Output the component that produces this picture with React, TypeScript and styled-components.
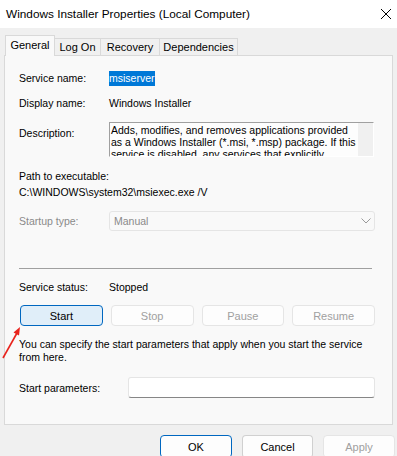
import styled, { createGlobalStyle } from "styled-components";

const GlobalStyle = createGlobalStyle`
  html, body {
    margin: 0;
    padding: 0;
    background: #f0f0f0;
  }
  body {
    font-family: "Liberation Sans", Arial, sans-serif;
    font-size: 10.5px;
    color: #000;
  }
`;

const Window = styled.div`
  position: relative;
  width: 397px;
  height: 456px;
  overflow: hidden;
  background: #f0f0f0;
`;

const TitleBar = styled.div`
  height: 28px;
  background: #ffffff;
  display: flex;
  align-items: center;
  justify-content: space-between;
  padding: 0 5px 0 6px;
`;

const Title = styled.div`
  font-size: 11.8px;
  color: #000;
`;

const Body = styled.div`
  padding: 7px 2px 0 4px;
`;

const TabStrip = styled.div`
  display: flex;
  align-items: flex-end;
  height: 20px;
  margin-left: 1px;
`;

const Tab = styled.div<{ $active?: boolean; $width: number }>`
  position: relative;
  z-index: ${({ $active }) => ($active ? 2 : 1)};
  box-sizing: border-box;
  width: ${({ $width }) => $width}px;
  height: ${({ $active }) => ($active ? 21 : 17)}px;
  margin-bottom: ${({ $active }) => ($active ? -1 : 0)}px;
  margin-left: -1px;
  background: ${({ $active }) => ($active ? "#f9f9f9" : "#f0f0f0")};
  border: 1px solid #d9d9d9;
  border-bottom: none;
  display: flex;
  align-items: center;
  justify-content: center;
  font-size: 11px;
  padding-bottom: ${({ $active }) => ($active ? 2 : 0)}px;
  &:first-child {
    margin-left: 0;
  }
`;

const Panel = styled.div`
  position: relative;
  box-sizing: border-box;
  width: 389px;
  height: 370px;
  border: 1px solid #d9d9d9;
  background: #f9f9f9;
  padding: 12px 17px 0 14px;
`;

const FieldRow = styled.div<{ $mt?: number; $h: number; $label?: number; $align?: string }>`
  display: grid;
  grid-template-columns: ${({ $label }) => $label ?? 90}px 1fr;
  align-items: ${({ $align }) => $align ?? "center"};
  height: ${({ $h }) => $h}px;
  margin-top: ${({ $mt }) => $mt ?? 0}px;
`;

const Label = styled.div<{ $disabled?: boolean; $offset?: number }>`
  line-height: 20px;
  margin-top: ${({ $offset }) => $offset ?? 0}px;
  color: ${({ $disabled }) => ($disabled ? "#8a8a8a" : "#000")};
  white-space: nowrap;
`;

const Value = styled.div`
  white-space: nowrap;
`;

const Selected = styled.span`
  background: #0078d7;
  color: #fff;
  padding: 1px 0 2px;
`;

const TextBox = styled.div`
  box-sizing: border-box;
  width: 265px;
  height: 35px;
  border-top: 1px solid #a0a0a0;
  border-left: 1px solid #a0a0a0;
  border-right: 1px solid #ffffff;
  border-bottom: 1px solid #ffffff;
  background: #fdfdfd;
  display: flex;
  overflow: hidden;
`;

const TextLines = styled.div`
  flex: 1;
  padding: 1px 0 0 1px;
  line-height: 12px;
  white-space: nowrap;
  overflow: hidden;
`;

const ScrollTrack = styled.div`
  width: 15px;
  background: #f0f0f0;
`;

const PathBlock = styled.div`
  margin-top: 11px;
  line-height: 16px;
`;

const Dropdown = styled.div`
  box-sizing: border-box;
  height: 20px;
  width: 266px;
  border: 1px solid #e5e5e5;
  border-radius: 3px;
  background: #f9f9f9;
  color: #8a8a8a;
  display: flex;
  align-items: center;
  justify-content: space-between;
  padding: 0 3px 0 4px;
`;

const Separator = styled.div`
  height: 1px;
  background: #a0a0a0;
  margin: 37px 3px 0 0;
`;

const ButtonGrid = styled.div`
  display: grid;
  grid-template-columns: repeat(4, 1fr);
  column-gap: 8px;
  margin: 8px 0 0 1px;
  height: 21px;
`;

const Button = styled.div<{ $variant?: "primary" | "default" | "disabled" | "focus"; $width?: number }>`
  box-sizing: border-box;
  height: 100%;
  width: ${({ $width }) => ($width ? `${$width}px` : "auto")};
  border-radius: 4px;
  display: flex;
  align-items: center;
  justify-content: center;
  font-size: 11px;
  background: ${({ $variant }) =>
    $variant === "focus" ? "#e0eef9" : "#fdfdfd"};
  color: ${({ $variant }) => ($variant === "disabled" ? "#a0a0a0" : "#000")};
  border: 1px solid
    ${({ $variant }) =>
      $variant === "focus" || $variant === "primary"
        ? "#0067c0"
        : $variant === "disabled"
        ? "#e5e5e5"
        : "#d0d0d0"};
  border-bottom-color: ${({ $variant }) =>
    $variant === "focus" || $variant === "primary"
      ? "#0067c0"
      : $variant === "disabled"
      ? "#e5e5e5"
      : "#b8b8b8"};
`;

const HelpText = styled.div`
  margin-top: 12px;
  line-height: 13px;
  white-space: nowrap;
`;

const Input = styled.div`
  box-sizing: border-box;
  height: 21px;
  width: 247px;
  background: #ffffff;
  border: 1px solid #e5e5e5;
  border-bottom-color: #868686;
  border-radius: 3px;
`;

const Footer = styled.div`
  display: flex;
  justify-content: flex-end;
  gap: 10px;
  margin-top: 10px;
  height: 23px;
`;

const ArrowOverlay = styled.svg`
  position: absolute;
  left: 0;
  top: 320px;
  width: 30px;
  height: 45px;
`;

const CloseIcon = () => (
  <svg width="12" height="12" viewBox="0 0 12 12">
    <path d="M1 1 L11 11 M11 1 L1 11" stroke="#000" strokeWidth="1" fill="none" />
  </svg>
);

const Chevron = () => (
  <svg width="10" height="6" viewBox="0 0 10 6">
    <path d="M0.5 0.5 L5 5 L9.5 0.5" stroke="#9a9a9a" strokeWidth="1" fill="none" />
  </svg>
);

const tabs = [
  { label: "General", width: 50 },
  { label: "Log On", width: 47 },
  { label: "Recovery", width: 60 },
  { label: "Dependencies", width: 79 },
];

const App = () => {
  return (
    <Window>
      <GlobalStyle />
      <TitleBar>
        <Title>Windows Installer Properties (Local Computer)</Title>
        <CloseIcon />
      </TitleBar>
      <Body>
        <TabStrip>
          {tabs.map((t, i) => (
            <Tab key={t.label} $active={i === 0} $width={t.width}>
              {t.label}
            </Tab>
          ))}
        </TabStrip>
        <Panel>
          <FieldRow $h={20}>
            <Label>Service name:</Label>
            <Value>
              <Selected>msiserver</Selected>
            </Value>
          </FieldRow>
          <FieldRow $h={20} $mt={5}>
            <Label>Display name:</Label>
            <Value>Windows Installer</Value>
          </FieldRow>
          <FieldRow $h={35} $mt={9} $align="start">
            <Label $offset={1}>Description:</Label>
            <TextBox>
              <TextLines>
                Adds, modifies, and removes applications provided
                <br />
                as a Windows Installer (*.msi, *.msp) package. If this
                <br />
                service is disabled, any services that explicitly
              </TextLines>
              <ScrollTrack />
            </TextBox>
          </FieldRow>
          <PathBlock>
            Path to executable:
            <br />
            C:\WINDOWS\system32\msiexec.exe /V
          </PathBlock>
          <FieldRow $h={20} $mt={11}>
            <Label $disabled>Startup type:</Label>
            <Dropdown>
              Manual
              <Chevron />
            </Dropdown>
          </FieldRow>
          <Separator />
          <FieldRow $h={20} $mt={8}>
            <Label>Service status:</Label>
            <Value>Stopped</Value>
          </FieldRow>
          <ButtonGrid>
            <Button $variant="focus">Start</Button>
            <Button $variant="disabled">Stop</Button>
            <Button $variant="disabled">Pause</Button>
            <Button $variant="disabled">Resume</Button>
          </ButtonGrid>
          <HelpText>
            You can specify the start parameters that apply when you start the service
            <br />
            from here.
          </HelpText>
          <FieldRow $h={21} $mt={13} $label={109}>
            <Label>Start parameters:</Label>
            <Input />
          </FieldRow>
        </Panel>
        <Footer>
          <Button $variant="primary" $width={72}>
            OK
          </Button>
          <Button $variant="default" $width={71}>
            Cancel
          </Button>
          <Button $variant="disabled" $width={72}>
            Apply
          </Button>
        </Footer>
      </Body>
      <ArrowOverlay viewBox="0 320 30 45">
        <path d="M3 358 L17 333" stroke="#e8231d" strokeWidth="1.6" fill="none" />
        <path d="M20 327 L13.5 332.5 L19 335.5 Z" fill="#e8231d" />
      </ArrowOverlay>
    </Window>
  );
};

export default App;
